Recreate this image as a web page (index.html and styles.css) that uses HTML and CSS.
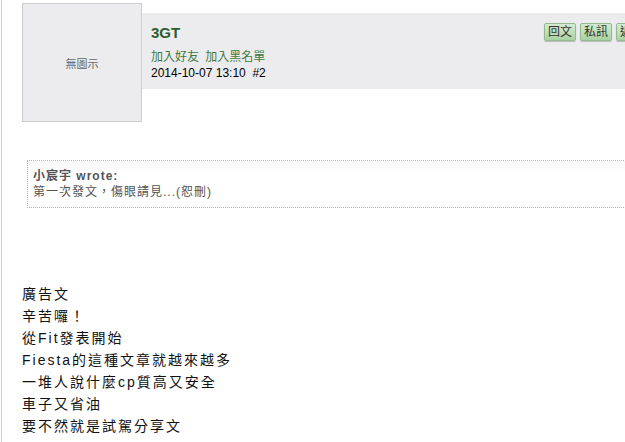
FILE: index.html
```html
<!DOCTYPE html>
<html lang="zh-Hant">
<head>
  <meta charset="UTF-8" />
  <title>3GT #2</title>
  <link rel="stylesheet" href="styles.css">
</head>
<body>

  <div class="post">
    <div class="post-head">
      <div class="avatar">無圖示</div>
      <div class="head-band">
        <div class="info">
          <div class="name">3GT</div>
          <div class="links"><a href="#">加入好友</a> <a href="#">加入黑名單</a></div>
          <div class="date">2014-10-07 13:10&nbsp; #2</div>
        </div>
        <div class="actions">
          <button>回文</button>
          <button>私訊</button>
          <button>返回</button>
          <button>檢舉</button>
        </div>
      </div>
    </div>

    <div class="quote">
      <div class="quote-who">小宸宇 wrote:</div>
      <div class="quote-text">第一次發文，傷眼請見...(恕刪)</div>
    </div>

    <div class="content">
      廣告文<br>
      辛苦囉！<br>
      從Fit發表開始<br>
      Fiesta的這種文章就越來越多<br>
      一堆人說什麼cp質高又安全<br>
      車子又省油<br>
      要不然就是試駕分享文
    </div>
  </div>

</body>
</html>
```

FILE: styles.css
```css
html, body {
  margin: 0;
  overflow: hidden;
}
body {
  font-family: "Liberation Sans", "Noto Sans CJK TC", sans-serif;
  color: #000;
  background: #fff;
}
.post {
  width: 780px;
  margin-left: 1px;
  border-left: 1px solid #cfcfcf;
  padding-left: 20px;
  min-height: 460px;
}
.post-head {
  display: flex;
  align-items: flex-start;
  padding-top: 3px;
}
.avatar {
  width: 118px;
  height: 117px;
  border: 1px solid #cccccc;
  background: #ececee;
  color: #666;
  font-size: 11px;
  display: flex;
  align-items: center;
  justify-content: center;
  flex: none;
}
.head-band {
  flex: 1;
  display: flex;
  margin-top: 10px;
  height: 76px;
  background: #ececee;
}
.info {
  width: 402px;
  padding: 10px 0 0 9px;
  box-sizing: border-box;
}
.name {
  font-size: 15px;
  font-weight: bold;
  color: #2c5e2c;
  line-height: 20px;
  margin-bottom: 6px;
}
.links, .date {
  font-size: 12px;
  line-height: 16px;
}
.links a {
  color: #3f7a3f;
  text-decoration: none;
  margin-right: 3px;
}
.actions {
  display: flex;
  gap: 4px;
  padding-top: 10px;
  align-items: flex-start;
}
.actions button {
  font-family: inherit;
  font-size: 12px;
  line-height: 14px;
  height: 18px;
  padding: 1px 3px;
  color: #333;
  border: 1px solid #93bb8f;
  border-radius: 2px;
  background: linear-gradient(#d4ecd0, #a9d2a2);
  box-shadow: 0 1px 1px rgba(0,0,0,0.2);
}
.quote {
  margin: 38px 0 0 5px;
  padding: 7px 5px 7px 5px;
  border: 1px dotted #b5b5b5;
  border-right: none;
  font-size: 12px;
  line-height: 16px;
  color: #555;
  background: linear-gradient(#f7f7f7, #fff 12px);
}
.quote-who {
  font-weight: bold;
  letter-spacing: 1px;
}
.quote-text {
  letter-spacing: 1px;
}
.content {
  margin-top: 75px;
  font-size: 14px;
  line-height: 22px;
  letter-spacing: 2px;
  color: #111;
}
```
